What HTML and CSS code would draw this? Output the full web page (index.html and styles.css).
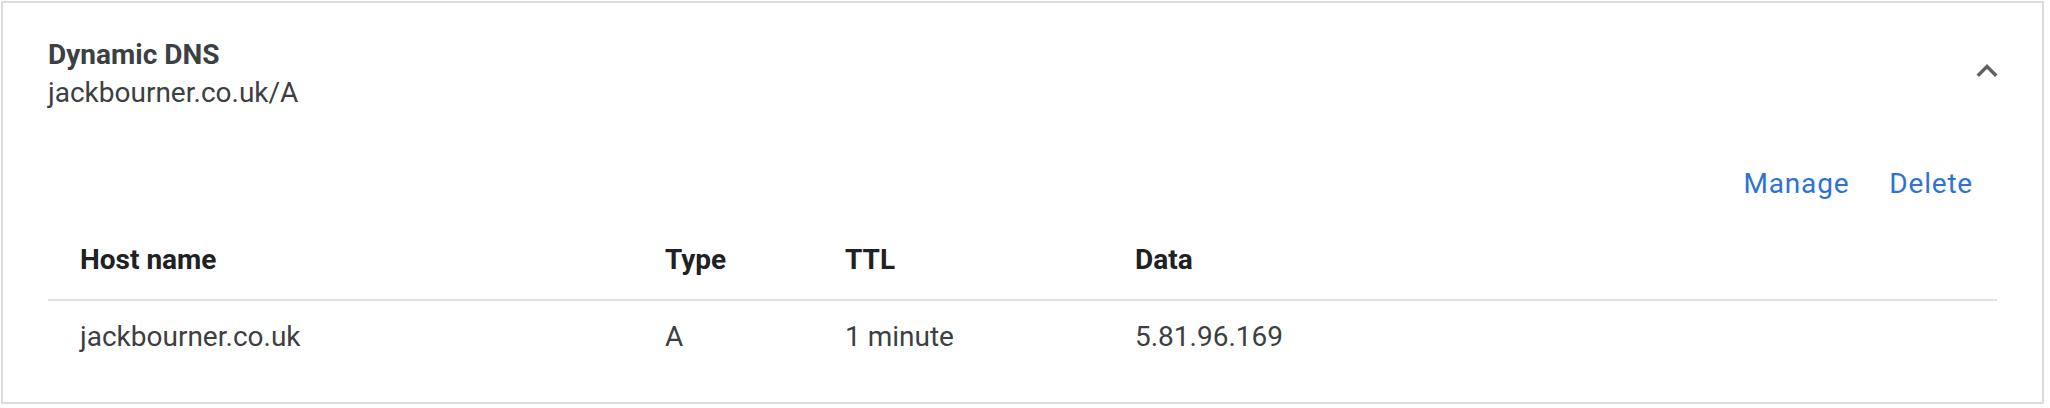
FILE: index.html
```html
<!DOCTYPE html>
<html>
<head>
<meta charset="utf-8">
<link rel="stylesheet" href="styles.css">
</head>
<body>
<div class="card">
  <div class="card-header">
    <div class="titles">
      <div class="title">Dynamic DNS</div>
      <div class="subtitle">jackbourner.co.uk/A</div>
    </div>
    <svg class="chevron" viewBox="0 0 24 24" width="42" height="42"><path d="M12 8l-6 6 1.41 1.41L12 10.83l4.59 4.58L18 14z" fill="#5f6368"/></svg>
  </div>
  <div class="actions">
    <span class="action">Manage</span>
    <span class="action">Delete</span>
  </div>
  <div class="table">
    <div class="row head">
      <div class="cell">Host name</div>
      <div class="cell">Type</div>
      <div class="cell">TTL</div>
      <div class="cell">Data</div>
    </div>
    <div class="row body">
      <div class="cell">jackbourner.co.uk</div>
      <div class="cell">A</div>
      <div class="cell">1 minute</div>
      <div class="cell">5.81.96.169</div>
    </div>
  </div>
</div>
</body>
</html>
```

FILE: styles.css
```css
html, body {
  margin: 0;
  padding: 0;
  background: #ffffff;
}
body {
  font-family: Roboto, "Liberation Sans", Arial, sans-serif;
  font-size: 28px;
  color: #3c4043;
}
.card {
  box-sizing: border-box;
  margin: 1px 0 0 1px;
  width: 2043px;
  height: 403px;
  border: 2px solid #dadce0;
  display: flex;
  flex-direction: column;
}
.card-header {
  display: flex;
  justify-content: space-between;
  align-items: flex-start;
  padding: 33px 34px 0 45px;
}
.title {
  font-weight: 700;
  line-height: 38px;
  color: #3c4043;
}
.subtitle {
  line-height: 38px;
  color: #3c4043;
}
.chevron {
  display: block;
  margin-top: 14px;
}
.actions {
  display: flex;
  justify-content: flex-end;
  gap: 40px;
  margin-top: 52px;
  padding-right: 69px;
  line-height: 40px;
}
.action {
  color: #2f72d6;
  font-weight: 400;
  letter-spacing: 0.8px;
}
.table {
  margin: 35px 45px 0 45px;
}
.row {
  display: grid;
  grid-template-columns: 585px 180px 290px 1fr;
  line-height: 40px;
}
.row.head {
  font-weight: 700;
  color: #202124;
  padding-top: 1px;
  padding-bottom: 19px;
  border-bottom: 2px solid #e0e0e0;
}
.row.body {
  padding-top: 16px;
  color: #3c4043;
}
.cell {
  padding-left: 32px;
}
```
